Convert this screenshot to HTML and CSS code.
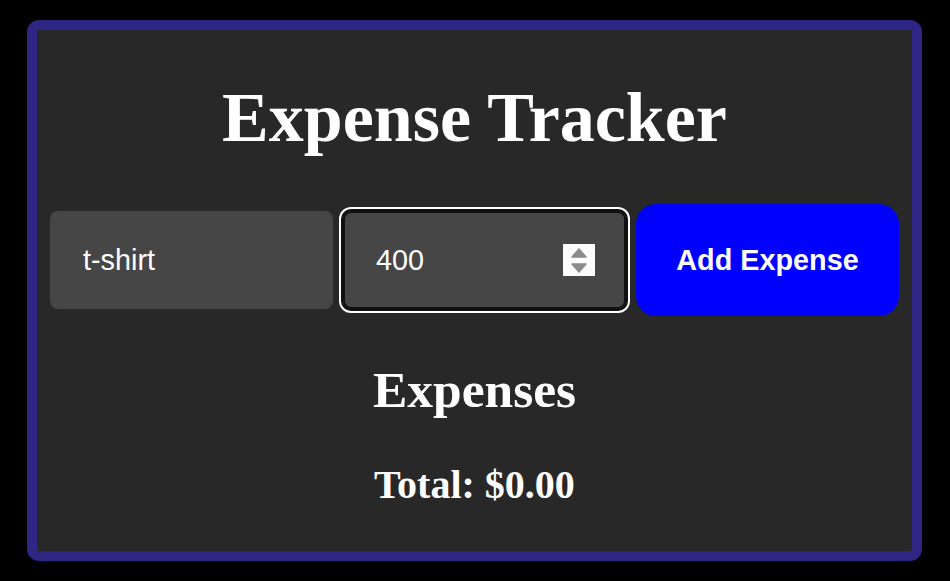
FILE: index.html
```html
<!DOCTYPE html>
<html lang="en">
<head>
<meta charset="utf-8">
<title>Expense Tracker</title>
<link rel="stylesheet" href="styles.css">
</head>
<body>
<div class="app">
  <h1 class="title">Expense Tracker</h1>
  <div class="form-row">
    <div class="field">
      <input class="field-input" type="text" value="t-shirt">
    </div>
    <div class="field field-focused">
      <input class="field-input" type="text" value="400">
      <span class="spinner">
        <svg width="32" height="32" viewBox="0 0 32 32">
          <path d="M16 5 L23 13 L9 13 Z" fill="#8b8b8b" stroke="#8b8b8b" stroke-width="1.5" stroke-linejoin="round"/>
          <path d="M16 28 L23 20 L9 20 Z" fill="#8b8b8b" stroke="#8b8b8b" stroke-width="1.5" stroke-linejoin="round"/>
        </svg>
      </span>
    </div>
    <button class="add-btn" type="button">Add Expense</button>
  </div>
  <h2 class="subtitle">Expenses</h2>
  <h3 class="total">Total: $0.00</h3>
</div>
</body>
</html>
```
FILE: styles.css
```css
html, body {
  margin: 0;
  padding: 0;
  background: #000;
}
body {
  padding: 20px 28px 20px 27px;
}
.app {
  box-sizing: border-box;
  width: 895px;
  height: 541px;
  background: #282828;
  border: 10px solid #2f2582;
  border-radius: 12px;
  padding: 0 13px;
  display: flex;
  flex-direction: column;
  align-items: center;
  color: #fff;
  font-family: "Liberation Serif", "Times New Roman", serif;
}
.title {
  margin: 48px 0 0;
  font-size: 70px;
  line-height: 80px;
  font-weight: bold;
}
.form-row {
  margin-top: 46px;
  display: flex;
  align-items: center;
  gap: 10px;
  height: 112px;
}
.field {
  box-sizing: border-box;
  width: 283px;
  height: 98px;
  background: #464646;
  border-radius: 8px;
  display: flex;
  align-items: center;
  padding: 0 31px 0 33px;
}
.field-focused {
  box-shadow: inset 0 0 0 2px #111, 0 0 0 2px #111, 0 0 0 4px #fff;
}
.field-input {
  flex: 1;
  min-width: 0;
  border: 0;
  outline: 0;
  padding: 0;
  margin: 0;
  background: transparent;
  color: #fff;
  font-family: "Liberation Sans", Arial, sans-serif;
  font-size: 28.8px;
}
.spinner {
  width: 32px;
  height: 32px;
  background: #fbfbfb;
  display: block;
  flex: none;
}
.spinner svg {
  display: block;
}
.add-btn {
  width: 263px;
  height: 112px;
  border: 0;
  border-radius: 20px;
  background: #0000ff;
  color: #fff;
  font-family: "Liberation Sans", Arial, sans-serif;
  font-size: 28.8px;
  font-weight: bold;
  padding: 0;
  cursor: pointer;
}
.subtitle {
  margin: 44px 0 0;
  font-size: 51.5px;
  line-height: 60px;
  font-weight: bold;
}
.total {
  margin: 42px 0 0;
  font-size: 40px;
  line-height: 45px;
  font-weight: bold;
}
```
